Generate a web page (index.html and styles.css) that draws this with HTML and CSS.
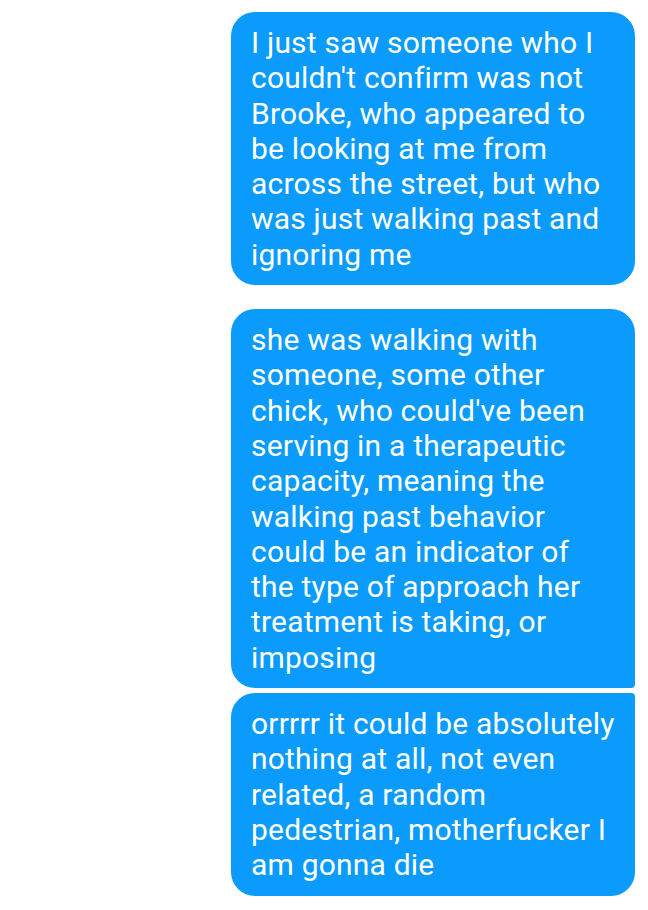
FILE: index.html
```html
<!DOCTYPE html>
<html>
<head>
<meta charset="utf-8">
<link rel="stylesheet" href="styles.css">
</head>
<body>
<div class="thread">
  <div class="bubble first">I just saw someone who I<br>couldn't confirm was not<br>Brooke, who appeared to<br>be looking at me from<br>across the street, but who<br>was just walking past and<br>ignoring me</div>
  <div class="group">
    <div class="bubble top">she was walking with<br>someone, some other<br>chick, who could've been<br>serving in a therapeutic<br>capacity, meaning the<br>walking past behavior<br>could be an indicator of<br>the type of approach her<br>treatment is taking, or<br>imposing</div>
    <div class="bubble bottom">orrrrr it could be absolutely<br>nothing at all, not even<br>related, a random<br>pedestrian, motherfucker I<br>am gonna die</div>
  </div>
</div>
</body>
</html>
```
FILE: styles.css
```css
html, body {
  margin: 0;
  padding: 0;
  background: #ffffff;
}
.thread {
  display: flex;
  flex-direction: column;
  align-items: flex-end;
  gap: 24px;
  padding: 12px 13px 0 0;
}
.group {
  display: flex;
  flex-direction: column;
  gap: 5px;
}
.bubble {
  box-sizing: border-box;
  width: 404px;
  background: #0a9bfd;
  color: #ffffff;
  font-family: Roboto, "Noto Sans", sans-serif;
  font-size: 30px;
  line-height: 35.3px;
  letter-spacing: 0.2px;
  padding: 13px 12px 13px 20px;
  border-radius: 24px;
  white-space: nowrap;
}
.bubble.top {
  border-bottom-right-radius: 4px;
}
.bubble.bottom {
  border-top-right-radius: 4px;
}
```
